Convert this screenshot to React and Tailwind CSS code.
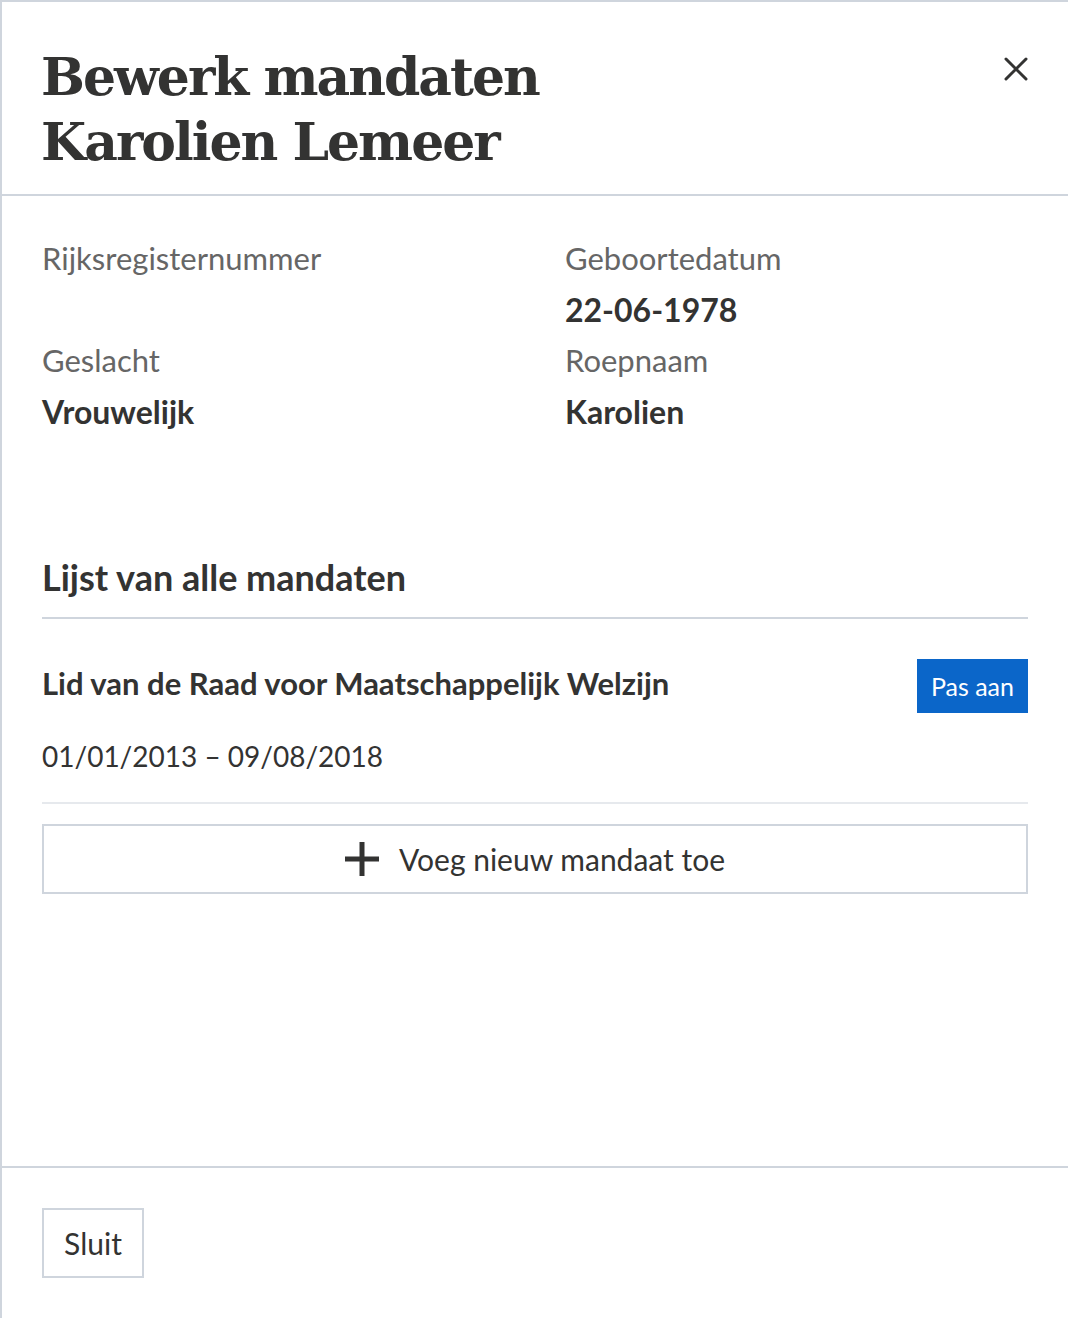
import React from 'react'

const sans = { fontFamily: 'Lato, "Open Sans", sans-serif' }
const serif = { fontFamily: '"DejaVu Serif", "Liberation Serif", serif' }

const FIELDS = [
  { label: 'Rijksregisternummer', value: '' },
  { label: 'Geboortedatum', value: '22-06-1978' },
  { label: 'Geslacht', value: 'Vrouwelijk' },
  { label: 'Roepnaam', value: 'Karolien' },
]

export default function App() {
  return (
    <div
      className="w-[1068px] h-[1318px] bg-white border-l-2 border-t-2 border-[#cfd5dd] flex flex-col text-[#333332]"
      style={sans}
    >
      {/* Header */}
      <header className="h-[194px] shrink-0 border-b-2 border-[#cfd5dd] flex justify-between pl-[39px] pr-[40px] pt-[42px]">
        <h1 className="text-[52px] leading-[65px] font-bold tracking-[-2px]" style={serif}>
          Bewerk mandaten
          <br />
          Karolien Lemeer
        </h1>
        <button className="w-[24px] h-[24px] mt-[13px] text-[#333332]">
          <svg viewBox="0 0 24 24" width="24" height="24" fill="none" stroke="currentColor" strokeWidth="3" strokeLinecap="round">
            <path d="M2 2L22 22M22 2L2 22" />
          </svg>
        </button>
      </header>

      {/* Body */}
      <main className="flex-1 px-[40px] pt-[37px]">
        <div className="grid grid-cols-[463px_463px] gap-x-[60px]">
          {FIELDS.map(f => (
            <div key={f.label}>
              <div className="text-[31px] leading-[51px] text-[#666666]">{f.label}</div>
              <div className="text-[32px] leading-[51px] font-bold h-[51px]">{f.value}</div>
            </div>
          ))}
        </div>

        <h3 className="mt-[115px] text-[36px] leading-[50px] font-bold pb-[15px] border-b-2 border-[#cfd5dd]">
          Lijst van alle mandaten
        </h3>

        <div className="pt-[40px] pb-[22px] border-b-2 border-[#e6e9ed]">
          <div className="flex justify-between items-start">
            <div className="text-[31px] leading-[48px] font-bold">
              Lid van de Raad voor Maatschappelijk Welzijn
            </div>
            <button className="h-[54px] px-[14px] bg-[#0b66c9] text-white text-[25px] leading-[54px]">
              Pas aan
            </button>
          </div>
          <div className="mt-[19px] text-[28px] leading-[48px]">01/01/2013 – 09/08/2018</div>
        </div>

        <button className="mt-[20px] w-full h-[70px] border-2 border-[#cfd5dd] flex items-center justify-center gap-[20px] text-[30px]">
          <svg viewBox="0 0 34 34" width="34" height="34" fill="none" stroke="#333332" strokeWidth="5">
            <path d="M17 0V34M0 17H34" />
          </svg>
          Voeg nieuw mandaat toe
        </button>
      </main>

      {/* Footer */}
      <footer className="h-[152px] shrink-0 border-t-2 border-[#cfd5dd] px-[40px] pt-[40px]">
        <button className="w-[102px] h-[70px] border-2 border-[#cfd5dd] text-[30px]">Sluit</button>
      </footer>
    </div>
  )
}
